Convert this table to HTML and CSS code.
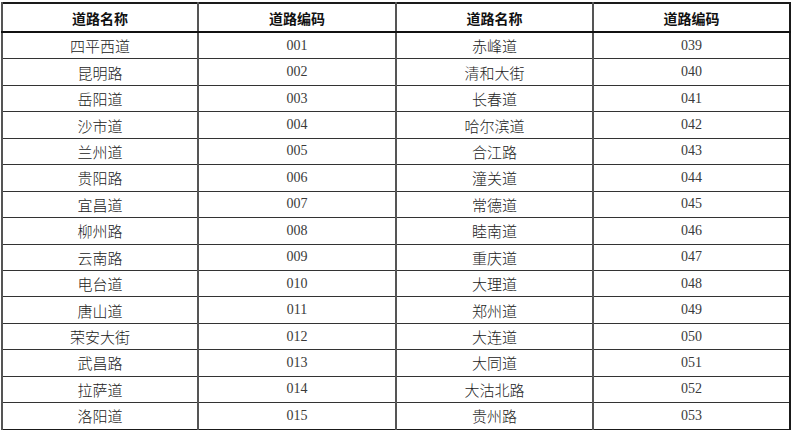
FILE: index.html
```html
<!DOCTYPE html>
<html lang="zh-CN">
<head>
<meta charset="utf-8">
<title>道路编码</title>
<link rel="stylesheet" href="styles.css">
</head>
<body>
<table class="roads">
<colgroup><col class="c1"><col class="c2"><col class="c3"><col class="c4"></colgroup>
<thead>
<tr><th>道路名称</th><th>道路编码</th><th>道路名称</th><th>道路编码</th></tr>
</thead>
<tbody>
<tr><td>四平西道</td><td class="num">001</td><td>赤峰道</td><td class="num">039</td></tr>
<tr><td>昆明路</td><td class="num">002</td><td>清和大街</td><td class="num">040</td></tr>
<tr><td>岳阳道</td><td class="num">003</td><td>长春道</td><td class="num">041</td></tr>
<tr><td>沙市道</td><td class="num">004</td><td>哈尔滨道</td><td class="num">042</td></tr>
<tr><td>兰州道</td><td class="num">005</td><td>合江路</td><td class="num">043</td></tr>
<tr><td>贵阳路</td><td class="num">006</td><td>潼关道</td><td class="num">044</td></tr>
<tr><td>宜昌道</td><td class="num">007</td><td>常德道</td><td class="num">045</td></tr>
<tr><td>柳州路</td><td class="num">008</td><td>睦南道</td><td class="num">046</td></tr>
<tr><td>云南路</td><td class="num">009</td><td>重庆道</td><td class="num">047</td></tr>
<tr><td>电台道</td><td class="num">010</td><td>大理道</td><td class="num">048</td></tr>
<tr><td>唐山道</td><td class="num">011</td><td>郑州道</td><td class="num">049</td></tr>
<tr><td>荣安大街</td><td class="num">012</td><td>大连道</td><td class="num">050</td></tr>
<tr><td>武昌路</td><td class="num">013</td><td>大同道</td><td class="num">051</td></tr>
<tr><td>拉萨道</td><td class="num">014</td><td>大沽北路</td><td class="num">052</td></tr>
<tr><td>洛阳道</td><td class="num">015</td><td>贵州路</td><td class="num">053</td></tr>
</tbody>
</table>
</body>
</html>
```
FILE: styles.css
```css
html, body {
  margin: 0;
  padding: 0;
  background: #fff;
}
body {
  padding: 2px 0 0 1px;
  font-family: "Noto Sans CJK SC", "Liberation Serif", sans-serif;
  color: #2a2a2a;
}
.roads {
  border-collapse: collapse;
  table-layout: fixed;
  width: 788px;
  border: 2px solid #1a1a1a;
}
.c1 { width: 196px; }
.c2 { width: 198px; }
.c3 { width: 197px; }
.c4 { width: 197px; }
.roads th,
.roads td {
  border: 1px solid #333;
  border-left-width: 2px;
  border-left-color: #555;
  padding: 0;
  text-align: center;
  vertical-align: middle;
  overflow: hidden;
  white-space: nowrap;
}
.roads th {
  height: 27px;
  font-size: 14px;
  font-weight: 700;
  color: #111;
  border-bottom: 2px solid #111;
}
.roads td {
  height: 25.45px;
  font-size: 15px;
  font-weight: 300;
  line-height: 1;
  color: #222;
}
.roads td.num {
  font-family: "Liberation Serif", serif;
  font-size: 14px;
  font-weight: 400;
  color: #3a3a3a;
}
```
